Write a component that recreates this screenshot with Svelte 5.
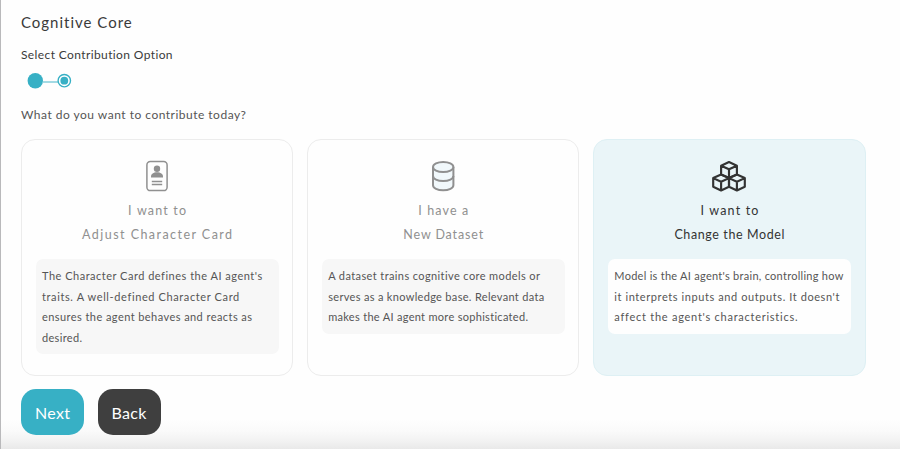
<script>
  const cards = [
    {
      icon: 'card',
      title: [['I want to', 58], ['Adjust Character Card', 150]],
      text: [
        ["The Character Card defines the AI agent's", 220],
        ['traits. A well-defined Character Card', 197],
        ['ensures the agent behaves and reacts as', 210],
        ['desired.', 40]
      ]
    },
    {
      icon: 'data',
      title: [['I have a', 50], ['New Dataset', 80]],
      text: [
        ['A dataset trains cognitive core models or', 212],
        ['serves as a knowledge base. Relevant data', 216],
        ['makes the AI agent more sophisticated.', 200]
      ]
    },
    {
      icon: 'model',
      active: true,
      title: [['I want to', 58], ['Change the Model', 110]],
      text: [
        ["Model is the AI agent's brain, controlling how", 229],
        ["it interprets inputs and outputs. It doesn't", 225],
        ["affect the agent's characteristics.", 183]
      ]
    }
  ];

  // Spreads the letters of a line so that it fills the given width.
  function fit(node, width) {
    node.style.letterSpacing = '0px';
    const natural = node.getBoundingClientRect().width;
    const gap = (width - natural) / (node.textContent.length - 1);
    node.style.letterSpacing = `${gap}px`;
    node.style.marginRight = `${-gap}px`;
  }
</script>

<main>
  <h1><span use:fit={111}>Cognitive Core</span></h1>
  <h2><span use:fit={152}>Select Contribution Option</span></h2>
  <svg class="steps" width="60" height="20" viewBox="0 0 60 20">
    <path d="M22 12H37" stroke="#7bcbd9" stroke-width="1.4" />
    <circle cx="14.3" cy="10.8" r="7.7" fill="#37b0c5" />
    <circle cx="43.3" cy="10.7" r="6.2" fill="#fff" stroke="#37b0c5" stroke-width="1.4" />
    <circle cx="43.3" cy="10.7" r="3.9" fill="#37b0c5" />
  </svg>
  <p class="question"><span use:fit={225}>What do you want to contribute today?</span></p>

  <div class="cards">
    {#each cards as card}
      <section class="card" class:active={card.active}>
        <svg class="icon" width="36" height="32" viewBox="0 0 36 32" fill="none" stroke="currentColor">
          {#if card.icon === 'card'}
            <rect x="7.9" y="1.6" width="20.2" height="29" rx="3.4" stroke-width="1.5" />
            <circle cx="18" cy="8.7" r="3.2" fill="currentColor" stroke="none" />
            <path d="M12 17.6v-1.2c0-2.4 2.5-4.1 6-4.1s6 1.7 6 4.1v1.2z" fill="currentColor" stroke="none" />
            <path d="M12.8 21.5h10.4M12.8 24.5h10.4" stroke-width="1.3" />
          {:else if card.icon === 'data'}
            <path d="M8 7v18.3c0 2.8 4.5 5 10.2 5s10.2-2.2 10.2-5V7" fill="#f1f8fb" stroke-width="2" />
            <ellipse cx="18.2" cy="7" rx="10.2" ry="5" fill="#f1f8fb" stroke-width="2" />
            <path d="M8 16c0 2.8 4.5 5 10.2 5s10.2-2.2 10.2-5" stroke-width="2" />
          {:else}
            <g stroke-width="2.15" stroke-linejoin="round">
              <path d="M18 2l7.9 3.7v8.9L18 18l-7.9-3.4V5.7zM10.1 5.7L18 9.3l7.9-3.6M18 9.3V18" />
              <path d="M10.1 14.6l7.9 3.5v8.7l-7.9 3.6-7.9-3.6v-8.7zM2.2 18.1l7.9 3.7 7.9-3.7M10.1 21.8v8.6" />
              <path d="M25.9 14.6l7.9 3.5v8.7l-7.9 3.6-7.9-3.6v-8.7zM18 18.1l7.9 3.7 7.9-3.7M25.9 21.8v8.6" />
            </g>
          {/if}
        </svg>
        <h3>
          {#each card.title as [line, width]}
            <div><span use:fit={width}>{line}</span></div>
          {/each}
        </h3>
        <div class="text">
          {#each card.text as [line, width]}
            <div><span use:fit={width}>{line}</span></div>
          {/each}
        </div>
      </section>
    {/each}
  </div>

  <div class="actions">
    <button class="next"><span use:fit={35}>Next</span></button>
    <button class="back"><span use:fit={35}>Back</span></button>
  </div>
</main>

<style>
  :global(body) {
    margin: 0;
    overflow: hidden;
  }
  main {
    box-sizing: border-box;
    height: 449px;
    padding: 11px 35px 0 20px;
    border-left: 1px solid #b9b9bb;
    background: linear-gradient(#fefefe 0, #fefefe 419px, #fafafa 431px, #f2f2f2 441px, #e9e9e9 449px);
    font-family: Lato, 'Open Sans', sans-serif;
    color: #3a3a3a;
  }
  span {
    display: inline-block;
    white-space: pre;
  }
  h1, h2, h3, p {
    margin: 0;
    font-weight: 400;
  }
  h1 {
    font-size: 15px;
    line-height: 22px;
  }
  h2 {
    margin-top: 13px;
    font-size: 12px;
    line-height: 18px;
  }
  .steps {
    display: block;
    margin-top: 6px;
  }
  .question {
    margin-top: 15px;
    font-size: 12px;
    line-height: 20px;
    color: #555;
  }
  .cards {
    display: flex;
    gap: 14px;
    width: 844.5px;
    margin-top: 14px;
  }
  .card {
    box-sizing: border-box;
    flex: 1;
    height: 237px;
    padding: 20px 13.5px 0;
    border: 1px solid #ececec;
    border-radius: 14px;
    background: #fefefe;
    color: #909090;
  }
  .card.active {
    border-color: #def0f4;
    background: #eaf5f8;
    color: #333;
  }
  .icon {
    display: block;
    margin: 0 auto;
  }
  h3 {
    margin-top: 7px;
    font-size: 12.5px;
    line-height: 24px;
    text-align: center;
  }
  .text {
    margin-top: 12px;
    padding: 7px 6.5px 6px;
    border-radius: 7px;
    background: #f7f7f7;
    font-size: 11px;
    line-height: 20.5px;
    color: #555;
  }
  .active .text {
    background: #fefefe;
  }
  .actions {
    display: flex;
    gap: 13.5px;
    margin-top: 13px;
  }
  button {
    width: 63px;
    height: 46px;
    padding: 0;
    border: 0;
    border-radius: 15px;
    font: 400 16px Lato, sans-serif;
    color: #fff;
  }
  .next {
    background: #37b0c5;
  }
  .back {
    background: #3f3f3f;
  }
</style>
